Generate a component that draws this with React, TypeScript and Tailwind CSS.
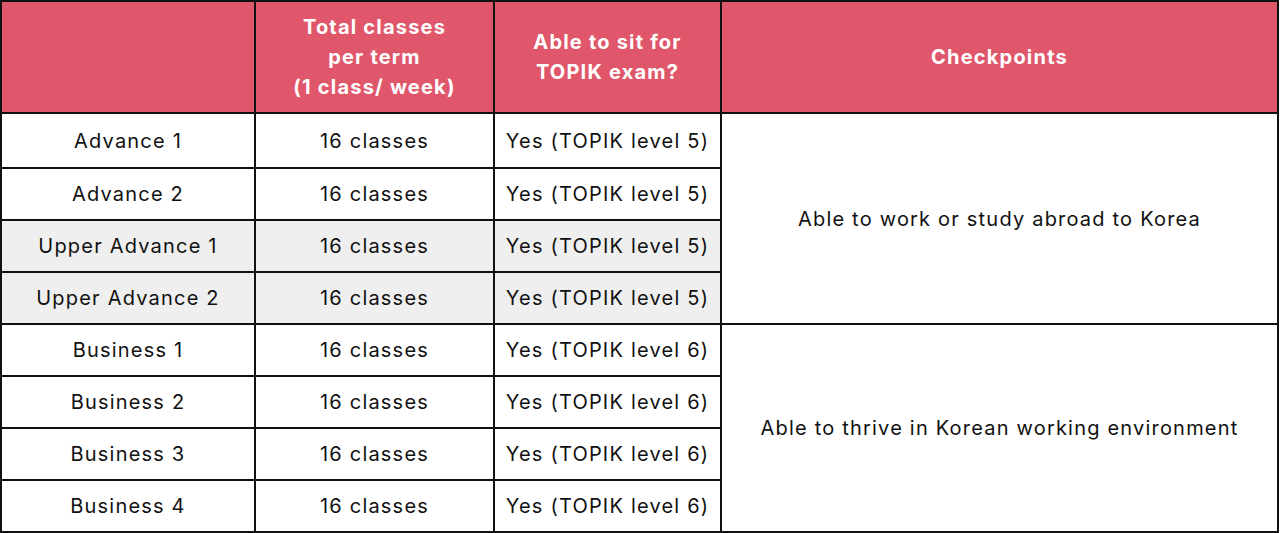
import React from "react"

const rows = [
  { level: "Advance 1", classes: "16 classes", topik: "Yes (TOPIK level 5)", bg: "bg-white", h: "h-[55px]" },
  { level: "Advance 2", classes: "16 classes", topik: "Yes (TOPIK level 5)", bg: "bg-white", h: "h-[52px]" },
  { level: "Upper Advance 1", classes: "16 classes", topik: "Yes (TOPIK level 5)", bg: "bg-[#efefef]", h: "h-[52px]" },
  { level: "Upper Advance 2", classes: "16 classes", topik: "Yes (TOPIK level 5)", bg: "bg-[#efefef]", h: "h-[52px]" },
  { level: "Business 1", classes: "16 classes", topik: "Yes (TOPIK level 6)", bg: "bg-white", h: "h-[52px]" },
  { level: "Business 2", classes: "16 classes", topik: "Yes (TOPIK level 6)", bg: "bg-white", h: "h-[52px]" },
  { level: "Business 3", classes: "16 classes", topik: "Yes (TOPIK level 6)", bg: "bg-white", h: "h-[52px]" },
  { level: "Business 4", classes: "16 classes", topik: "Yes (TOPIK level 6)", bg: "bg-white", h: "h-[52px]" },
]

const checkpoints: Record<number, string> = {
  0: "Able to work or study abroad to Korea",
  4: "Able to thrive in Korean working environment",
}

export default function App() {
  const cell = "border-2 border-[#111] text-center align-middle p-0"

  return (
    <div className="w-[1280px] h-[533px] bg-white font-['Inter','Liberation_Sans',sans-serif] text-[#111] tracking-[1.2px]">
      <table className="w-[1279px] table-fixed border-collapse">
        <colgroup>
          <col className="w-[254px]" />
          <col className="w-[239px]" />
          <col className="w-[227px]" />
          <col />
        </colgroup>
        <thead>
          <tr className="h-[112px] bg-[#e0576b] text-white text-[20px] font-semibold leading-[30px]">
            <th className={cell}></th>
            <th className={cell}>
              Total classes
              <br />
              per term
              <br />
              (1 class/ week)
            </th>
            <th className={cell}>
              Able to sit for
              <br />
              TOPIK exam?
            </th>
            <th className={cell}>Checkpoints</th>
          </tr>
        </thead>
        <tbody className="text-[20px]">
          {rows.map((r, i) => (
            <tr key={r.level} className={r.h}>
              <td className={`${cell} ${r.bg}`}>{r.level}</td>
              <td className={`${cell} ${r.bg}`}>{r.classes}</td>
              <td className={`${cell} ${r.bg}`}>{r.topik}</td>
              {checkpoints[i] !== undefined && (
                <td rowSpan={4} className={`${cell} bg-white`}>
                  {checkpoints[i]}
                </td>
              )}
            </tr>
          ))}
        </tbody>
      </table>
    </div>
  )
}
